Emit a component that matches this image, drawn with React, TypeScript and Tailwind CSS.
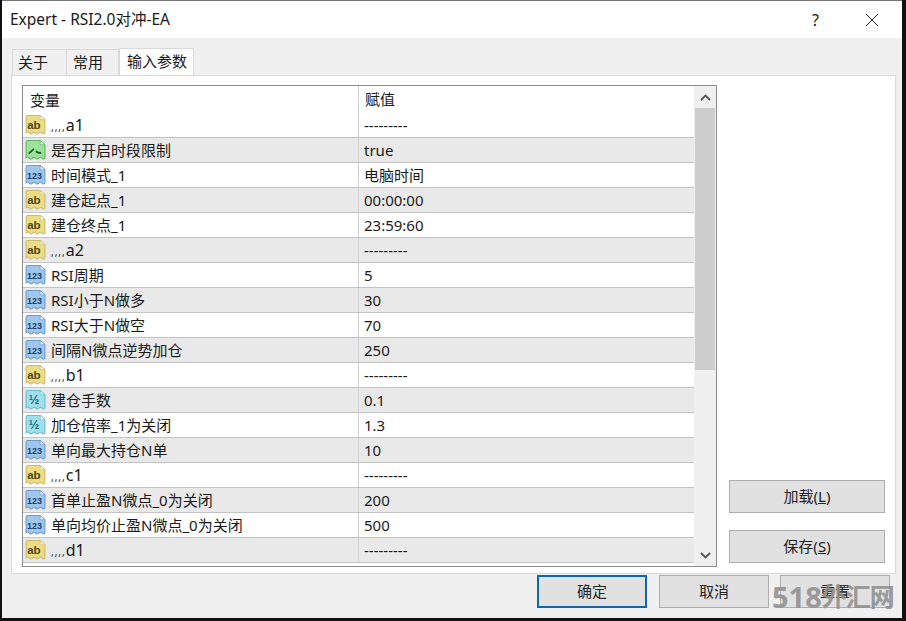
import React from "react";

type Kind = "ab" | "num" | "half" | "bool";

const rows: { kind: Kind; name: string; value: string }[] = [
  { kind: "ab", name: ",,,,a1", value: "---------" },
  { kind: "bool", name: "是否开启时段限制", value: "true" },
  { kind: "num", name: "时间模式_1", value: "电脑时间" },
  { kind: "ab", name: "建仓起点_1", value: "00:00:00" },
  { kind: "ab", name: "建仓终点_1", value: "23:59:60" },
  { kind: "ab", name: ",,,,a2", value: "---------" },
  { kind: "num", name: "RSI周期", value: "5" },
  { kind: "num", name: "RSI小于N做多", value: "30" },
  { kind: "num", name: "RSI大于N做空", value: "70" },
  { kind: "num", name: "间隔N微点逆势加仓", value: "250" },
  { kind: "ab", name: ",,,,b1", value: "---------" },
  { kind: "half", name: "建仓手数", value: "0.1" },
  { kind: "half", name: "加仓倍率_1为关闭", value: "1.3" },
  { kind: "num", name: "单向最大持仓N单", value: "10" },
  { kind: "ab", name: ",,,,c1", value: "---------" },
  { kind: "num", name: "首单止盈N微点_0为关闭", value: "200" },
  { kind: "num", name: "单向均价止盈N微点_0为关闭", value: "500" },
  { kind: "ab", name: ",,,,d1", value: "---------" },
];

const colors: Record<Kind, { fill: string; edge: string; ink: string; label: string }> = {
  ab: { fill: "#eedc84", edge: "#cbbb70", ink: "#4f4510", label: "ab" },
  num: { fill: "#9fc6ec", edge: "#6d9bcb", ink: "#163f73", label: "123" },
  half: { fill: "#9fe0ec", edge: "#68bccb", ink: "#1f6d80", label: "½" },
  bool: { fill: "#9be29b", edge: "#62b262", ink: "#0f5a1a", label: "" },
};

function TypeIcon({ kind }: { kind: Kind }) {
  const c = colors[kind];
  return (
    <svg width="21" height="21" viewBox="1 0.5 19 20" className="shrink-0">
      <path
        d="M1.5 2.5 Q1.5 1 3 1 H15 L19.5 5 V17.5 Q18 19.5 16.5 17.5 Q15 16 13.5 18 Q12 19.5 10.5 17.5 Q9 16 7.5 18 Q6 19.5 4.5 17.5 Q3 16 1.5 17.5 Z"
        fill={c.fill}
        stroke={c.edge}
        strokeWidth="1"
      />
      <path d="M15 1 V5 H19.5 Z" fill="#ffffff" stroke={c.edge} strokeWidth="0.7" />
      {kind === "bool" ? (
        <path d="M4 13.5 L9 9 M11 11 Q12.5 13.5 16 12.5" stroke={c.ink} strokeWidth="1.6" fill="none" />
      ) : (
        <text
          x={kind === "num" ? 9.5 : 9}
          y={kind === "half" ? 14 : 13.5}
          textAnchor="middle"
          fill={c.ink}
          fontSize={kind === "num" ? 8.5 : kind === "half" ? 12 : 11}
          fontWeight={kind === "num" ? 700 : 600}
          fontFamily="'Liberation Sans', sans-serif"
        >
          {c.label}
        </text>
      )}
    </svg>
  );
}

function DialogButton({ children, className }: { children: React.ReactNode; className: string }) {
  return (
    <div className={`flex h-[33px] w-[110px] items-center justify-center bg-[#e1e1e1] text-[#222] ${className}`}>
      {children}
    </div>
  );
}

// the separator rows start with tiny commas
function RowName({ name }: { name: string }) {
  if (name.startsWith(",,,,")) {
    return (
      <span className="whitespace-nowrap">
        <span className="text-[10px] tracking-[1px]">,,,,</span>
        <span className="text-[16px]">{name.slice(4)}</span>
      </span>
    );
  }
  return <span className="whitespace-nowrap">{name}</span>;
}

export default function App() {
  return (
    <div
      className="h-[621px] w-[906px] overflow-hidden bg-[#111] pl-[2px] text-[15px] text-[#1a1a1a]"
      style={{ fontFamily: "'Noto Sans', 'Noto Sans CJK SC', sans-serif" }}
    >
      <div className="relative flex h-[618px] w-[900px] flex-col border-t border-[#777] bg-[#f0f0f0]">
        {/* title bar */}
        <div className="flex h-[37px] shrink-0 items-center bg-white pl-2 pr-[23px]">
          <span className="flex-1 text-[15.5px] leading-none">Expert - RSI2.0对冲-EA</span>
          <span className="mr-[46px] text-[16px]">?</span>
          <svg width="14" height="14" viewBox="0 0 14 14" stroke="#222" strokeWidth="1">
            <path d="M1 1 L13 13 M13 1 L1 13" />
          </svg>
        </div>

        {/* tabs */}
        <div className="flex h-[37px] shrink-0 items-end pl-[10px]">
          <div className="flex h-[26px] w-[54px] items-center border border-r-0 border-b-0 border-[#d9d9d9] pl-[5px]">关于</div>
          <div className="flex h-[26px] w-[53px] items-center border border-b-0 border-[#d9d9d9] pl-[6px]">常用</div>
          <div className="mb-[-1px] flex h-[28px] w-[75px] items-center border border-b-0 border-[#d9d9d9] bg-white pb-[2px] pl-[7px]">输入参数</div>
        </div>

        {/* tab page */}
        <div className="ml-[9px] flex h-[499px] w-[885px] shrink-0 border border-[#d9d9d9] bg-white pl-[10px] pt-[9px]">
          <div className="flex h-[482px] w-[695px] shrink-0 border border-[#8c8c8c]">
            <div className="flex min-w-0 flex-1 flex-col">
              <div className="flex h-[27px] shrink-0 items-center">
                <div className="h-full w-[336px] border-r border-[#d0d0d0] pl-[7px] leading-[29px]">变量</div>
                <div className="pl-[6px] leading-[29px]">赋值</div>
              </div>
              {rows.map((r, i) => (
                <div
                  key={i}
                  className={`flex h-[25px] shrink-0 items-center border-b border-[#c4c4c4] ${i % 2 === 1 ? "bg-[#e9e9e9]" : "bg-white"}`}
                >
                  <div className="flex h-full w-[336px] items-center border-r border-[#d0d0d0] pl-[2px]">
                    <TypeIcon kind={r.kind} />
                    <span className="ml-[5px]">
                      <RowName name={r.name} />
                    </span>
                  </div>
                  <div className="pl-[5px]">{r.value}</div>
                </div>
              ))}
            </div>
            {/* scrollbar */}
            <div className="flex w-[22px] shrink-0 flex-col bg-[#f0f0f0]">
              <div className="flex h-[22px] shrink-0 items-center justify-center">
                <svg width="11" height="7" viewBox="0 0 11 7" fill="none" stroke="#555" strokeWidth="1.8">
                  <path d="M1 6 L5.5 1.5 L10 6" />
                </svg>
              </div>
              <div className="mx-[1px] h-[262px] bg-[#cdcdcd]" />
              <div className="flex-1" />
              <div className="flex h-[22px] shrink-0 items-center justify-center">
                <svg width="11" height="7" viewBox="0 0 11 7" fill="none" stroke="#555" strokeWidth="1.8">
                  <path d="M1 1 L5.5 5.5 L10 1" />
                </svg>
              </div>
            </div>
          </div>

          <div className="ml-[12px] mt-[395px] flex flex-col gap-[17px]">
            <DialogButton className="w-[156px] border border-[#adadad]">
              <span>加载(<span className="underline">L</span>)</span>
            </DialogButton>
            <DialogButton className="w-[156px] border border-[#adadad]">
              <span>保存(<span className="underline">S</span>)</span>
            </DialogButton>
          </div>
        </div>

        {/* bottom buttons */}
        <div className="ml-[535px] mt-[1px] flex gap-[12px]">
          <DialogButton className="border-2 border-[#0a66b0]">确定</DialogButton>
          <DialogButton className="border border-[#adadad]">取消</DialogButton>
          <DialogButton className="ml-[-1px] border border-[#adadad]">重置</DialogButton>
        </div>

        {/* watermark */}
        <div className="absolute left-[770px] top-[581px] flex items-center whitespace-nowrap font-bold leading-none text-[#8f8f8f]/90">
          <span className="text-[29px]">518</span>
          <span className="text-[25px] tracking-[-1px]">外汇网</span>
        </div>
      </div>
    </div>
  );
}
